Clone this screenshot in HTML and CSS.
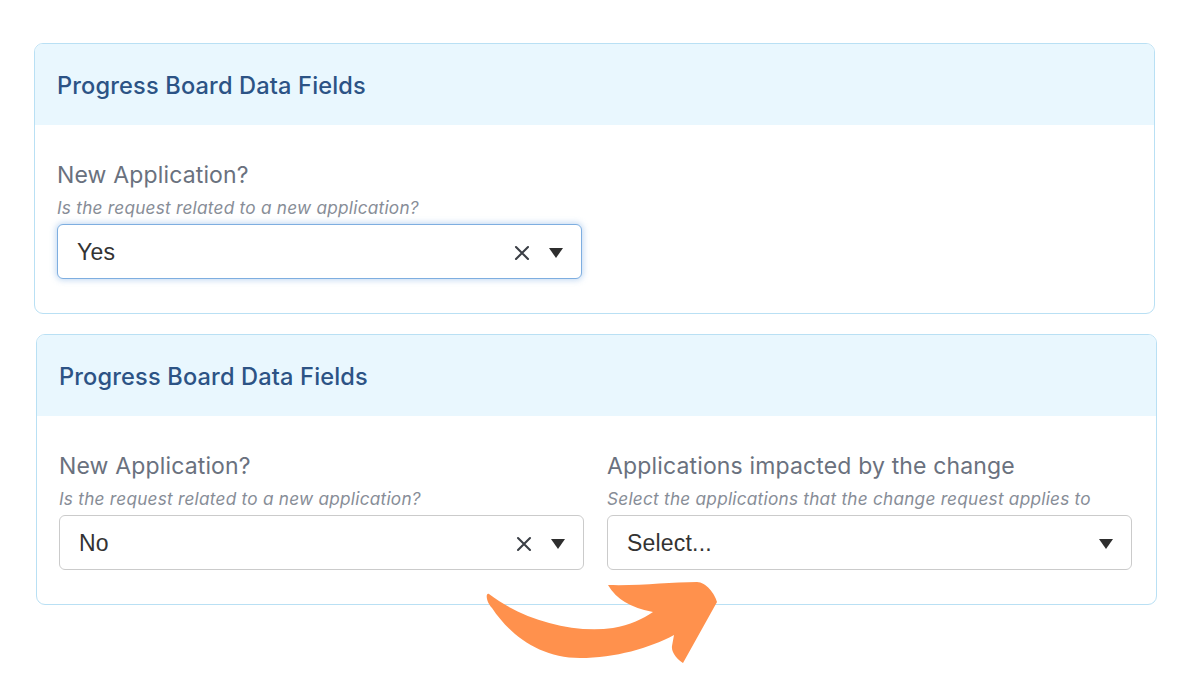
FILE: index.html
```html
<!DOCTYPE html>
<html>
<head>
<meta charset="utf-8">
<link rel="stylesheet" href="styles.css">
</head>
<body>
<div class="page">
  <section class="card card-a">
    <div class="card-head"><h2>Progress Board Data Fields</h2></div>
    <div class="card-body">
      <div class="field">
        <div class="label">New Application?</div>
        <div class="help">Is the request related to a new application?</div>
        <div class="select focused">
          <span class="value">Yes</span>
          <span class="icons">
            <svg class="clear" viewBox="0 0 16 16" width="16" height="16"><path d="M2 2L14 14M14 2L2 14" stroke="#3b3f46" stroke-width="2.1" stroke-linecap="round" fill="none"/></svg>
            <svg class="caret" viewBox="0 0 14 10" width="14" height="10"><path d="M0 0H14L7 10Z" fill="#2e2e2e"/></svg>
          </span>
        </div>
      </div>
    </div>
  </section>

  <section class="card card-b">
    <div class="card-head"><h2>Progress Board Data Fields</h2></div>
    <div class="card-body grid">
      <div class="field">
        <div class="label">New Application?</div>
        <div class="help">Is the request related to a new application?</div>
        <div class="select">
          <span class="value">No</span>
          <span class="icons">
            <svg class="clear" viewBox="0 0 16 16" width="16" height="16"><path d="M2 2L14 14M14 2L2 14" stroke="#3b3f46" stroke-width="2.1" stroke-linecap="round" fill="none"/></svg>
            <svg class="caret" viewBox="0 0 14 10" width="14" height="10"><path d="M0 0H14L7 10Z" fill="#2e2e2e"/></svg>
          </span>
        </div>
      </div>
      <div class="field">
        <div class="label">Applications impacted by the change</div>
        <div class="help">Select the applications that the change request applies to</div>
        <div class="select">
          <span class="value">Select...</span>
          <span class="icons">
            <svg class="caret" viewBox="0 0 14 10" width="14" height="10"><path d="M0 0H14L7 10Z" fill="#2e2e2e"/></svg>
          </span>
        </div>
      </div>
    </div>
  </section>

  <svg class="arrow" viewBox="0 0 260 110" width="260" height="110">
    <path d="M9 24 C40 48 90 64 133 58 C150 55 163 49 173 42 Q140 36 128 15 C160 16 190 12 217 12 C226 12 235 24 237 32 L203 93 C198 90 191 83 192 76 L194 65 C170 78 135 88 100 88 C60 88 30 65 12 38 C5 30 6 22 9 24 Z" fill="#ff914d"/>
  </svg>
</div>
</body>
</html>
```

FILE: styles.css
```css
* { box-sizing: border-box; }
html, body { margin: 0; padding: 0; background: #ffffff; }
body { font-family: Inter, "Noto Sans", sans-serif; }

.page {
  position: relative;
  width: 1196px;
  height: 688px;
  padding-top: 43px;
  display: flex;
  flex-direction: column;
  gap: 20px;
}

.card {
  width: 1121px;
  height: 271px;
  border: 1.5px solid #b9e0f4;
  border-radius: 9px;
  overflow: hidden;
  background: #fff;
}
.card-a { margin-left: 34px; }
.card-b { margin-left: 36px; }

.card-head {
  height: 81px;
  background: #e9f7fe;
  display: flex;
  align-items: center;
  padding: 2px 0 0 22px;
}
.card-head h2 {
  margin: 0;
  font-size: 23.6px;
  font-weight: 500;
  color: #2c5385;
  letter-spacing: 0.15px;
}

.card-body {
  padding: 37px 22px 0 22px;
}
.card-body.grid {
  display: grid;
  grid-template-columns: 525px 525px;
  column-gap: 23px;
}
.card-a .field { width: 525px; }

.label {
  font-size: 23px;
  line-height: 27px;
  color: #6a717e;
  letter-spacing: 0.15px;
}
.help {
  margin-top: 9px;
  font-size: 17.2px;
  line-height: 20px;
  font-style: italic;
  color: #878d97;
  letter-spacing: 0.25px;
}

.select {
  margin-top: 6px;
  height: 55px;
  border: 1.5px solid #cbcbcb;
  border-radius: 6px;
  display: flex;
  align-items: center;
  justify-content: space-between;
  padding: 2px 18px 0 19px;
  background: #fff;
}
.select.focused {
  border-color: #7eaee0;
  box-shadow: 0 0 6px 1px rgba(110, 165, 225, 0.45);
}
.value {
  font-family: "Liberation Sans", Arial, sans-serif;
  font-size: 23px;
  color: #333333;
  letter-spacing: 0.2px;
}
.icons {
  display: flex;
  align-items: center;
  gap: 19px;
}
.clear { display: block; }
.caret { display: block; }

.arrow {
  position: absolute;
  left: 480px;
  top: 570px;
}
```
